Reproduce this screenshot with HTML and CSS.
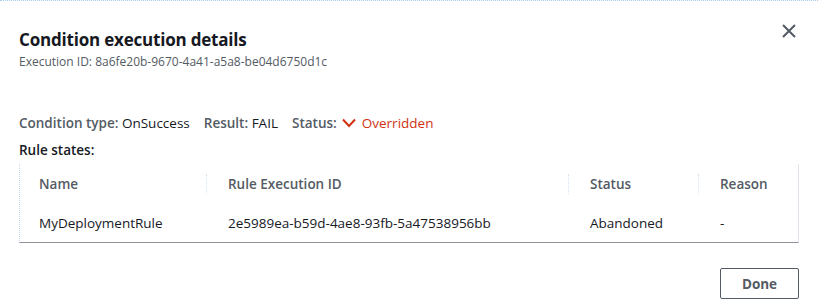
FILE: index.html
```html
<!DOCTYPE html>
<html lang="en">
<head>
  <meta charset="UTF-8">
  <title>Condition execution details</title>
  <link rel="stylesheet" href="styles.css">
</head>
<body>

<div class="modal">
  <div class="modal-header">
    <div class="heading">
      <h2 class="title">Condition execution details</h2>
      <div class="subtitle">Execution ID: 8a6fe20b-9670-4a41-a5a8-be04d6750d1c</div>
    </div>
    <button class="close-btn" aria-label="Close">
      <svg width="14" height="14" viewBox="0 0 14 14">
        <path d="M1 1 L13 13 M13 1 L1 13" stroke="#545b64" stroke-width="2" fill="none"/>
      </svg>
    </button>
  </div>

  <div class="modal-body">
    <div class="summary">
      <span><b>Condition type:</b> OnSuccess</span>
      <span><b>Result:</b> FAIL</span>
      <span><b>Status:</b>
        <span class="status-error">
          <svg width="14" height="10" viewBox="0 0 14 10">
            <path d="M1 1.5 L7 8 L13 1.5" stroke="#d13212" stroke-width="2" fill="none"/>
          </svg>
          Overridden
        </span>
      </span>
    </div>

    <div class="label">Rule states:</div>

    <div class="table">
      <div class="row head">
        <div class="cell">Name</div>
        <div class="cell sep">Rule Execution ID</div>
        <div class="cell sep">Status</div>
        <div class="cell sep">Reason</div>
      </div>
      <div class="row">
        <div class="cell">MyDeploymentRule</div>
        <div class="cell">2e5989ea-b59d-4ae8-93fb-5a47538956bb</div>
        <div class="cell">Abandoned</div>
        <div class="cell">-</div>
      </div>
    </div>
  </div>

  <div class="modal-footer">
    <button class="done-btn">Done</button>
  </div>
</div>

</body>
</html>
```

FILE: styles.css
```css
* {
  box-sizing: border-box;
}

html, body {
  margin: 0;
  padding: 0;
  background: #fff;
  font-family: "Open Sans", Arial, sans-serif;
  color: #16191f;
}

.modal {
  width: 818px;
  height: 305px;
  border-top: 1px dotted #a9cdf0;
  padding: 0 19px 0 19px;
  display: flex;
  flex-direction: column;
}

.modal-header {
  display: flex;
  justify-content: space-between;
  align-items: flex-start;
  padding-top: 27px;
}

.title {
  margin: 0;
  font-size: 17px;
  font-weight: 700;
  line-height: 24px;
  letter-spacing: -0.2px;
}

.subtitle {
  margin-top: 2px;
  font-size: 12px;
  line-height: 16px;
  color: #545b64;
}

.close-btn {
  border: none;
  background: none;
  padding: 0;
  margin-top: -4px;
  margin-right: 3px;
  cursor: pointer;
  display: flex;
}

.modal-body {
  padding-top: 43px;
}

.summary {
  display: flex;
  gap: 14px;
  font-size: 13.5px;
  line-height: 20px;
  color: #16191f;
}

.summary b {
  color: #545b64;
  font-weight: 600;
}

.status-error {
  color: #d13212;
}

.status-error svg {
  margin: 0 2px 0 2px;
}

.label {
  margin-top: 7px;
  font-size: 13.5px;
  font-weight: 600;
  line-height: 20px;
}

.table {
  margin-top: 4px;
  border-left: 1px dotted #c6d3ef;
  border-right: 1px solid #e3e3f0;
  border-bottom: 1px solid #8f949a;
  font-size: 13.5px;
}

.row {
  display: grid;
  grid-template-columns: 186px 362px 130px 1fr;
  height: 38px;
  align-items: center;
}

.row.head {
  height: 40px;
  font-weight: 600;
  color: #545b64;
}

.cell {
  padding-left: 19px;
}

.cell.sep {
  border-left: 1px dotted #d5e2f3;
  padding-left: 21px;
  line-height: 20px;
}

.row:not(.head) .cell + .cell {
  padding-left: 22px;
}

.modal-footer {
  display: flex;
  justify-content: flex-end;
  padding-top: 25px;
}

.done-btn {
  width: 79px;
  height: 31px;
  border: 1px solid #545b64;
  border-radius: 2px;
  background: #fff;
  font-family: inherit;
  font-size: 13.5px;
  font-weight: 700;
  color: #545b64;
  cursor: pointer;
}
```
